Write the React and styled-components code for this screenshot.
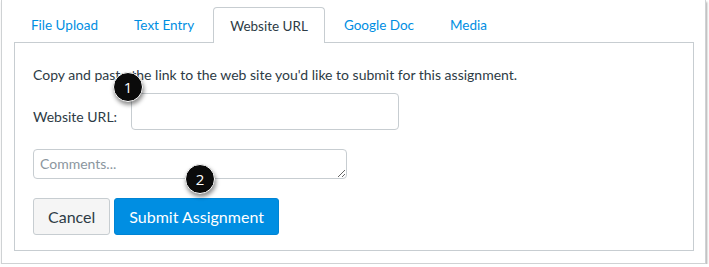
import styled, { createGlobalStyle } from "styled-components";

const GlobalStyle = createGlobalStyle`
  body {
    margin: 0;
    background: #ffffff;
    font-family: Lato, "Open Sans", sans-serif;
  }
`;

const tabs = ["File Upload", "Text Entry", "Website URL", "Google Doc", "Media"];

function App() {
  return (
    <>
      <GlobalStyle />
      <Frame>
        <TabList>
          {tabs.map((t) => (
            <Tab key={t} $active={t === "Website URL"}>
              {t}
            </Tab>
          ))}
        </TabList>
        <Panel>
          <Intro>Copy and paste the link to the web site you'd like to submit for this assignment.</Intro>
          <Row>
            <Label>Website URL:</Label>
            <UrlInput type="text" />
          </Row>
          <Comments placeholder="Comments..." />
          <Actions>
            <Button>Cancel</Button>
            <Button $primary>Submit Assignment</Button>
          </Actions>
        </Panel>
        {/* callout badges */}
        <Badge $x={126} $y={87}>1</Badge>
        <Badge $x={198} $y={179}>2</Badge>
      </Frame>
    </>
  );
}

const Frame = styled.div`
  position: relative;
  box-sizing: border-box;
  width: 705px;
  height: 264px;
  margin-left: 1px;
  padding: 7px 11px 0 12px;
  border: 1px solid #cfd2d4;
  border-top: none;
  box-shadow: 1px 2px 2px rgba(0, 0, 0, 0.35);
  background: #fff;
`;

const TabList = styled.div`
  display: flex;
  gap: 2px;
  height: 35px;
  position: relative;
  z-index: 1;
`;

const Tab = styled.div`
  box-sizing: border-box;
  height: ${(p) => (p.$active ? "36px" : "35px")};
  padding: 0 16px;
  display: flex;
  align-items: center;
  font-size: 13.5px;
  color: ${(p) => (p.$active ? "#2d3b45" : "#008ee2")};
  background: ${(p) => (p.$active ? "#fff" : "transparent")};
  border: 1px solid ${(p) => (p.$active ? "#c7cdd1" : "transparent")};
  border-bottom: none;
  border-radius: 4px 4px 0 0;
`;

const Panel = styled.div`
  box-sizing: border-box;
  width: 680px;
  height: 209px;
  border: 1px solid #c7cdd1;
  padding: 22px 18px 0;
  display: flex;
  flex-direction: column;
  color: #2d3b45;
`;

const Intro = styled.p`
  margin: 0;
  font-size: 14px;
  line-height: 20px;
`;

const Row = styled.div`
  display: flex;
  align-items: center;
  gap: 14px;
  margin-top: 8px;
`;

const Label = styled.label`
  font-size: 14px;
  margin-top: 10px;
`;

const UrlInput = styled.input`
  box-sizing: border-box;
  width: 268px;
  height: 37px;
  border: 1px solid #c7cdd1;
  border-radius: 4px;
  outline: none;
`;

const Comments = styled.textarea`
  box-sizing: border-box;
  width: 314px;
  height: 30px;
  margin-top: 19px;
  padding: 5px 6px;
  border: 1px solid #c7cdd1;
  border-radius: 4px;
  font-family: Lato, sans-serif;
  font-size: 14px;
  color: #2d3b45;
  &::placeholder {
    color: #8b969e;
  }
`;

const Actions = styled.div`
  display: flex;
  gap: 4px;
  margin-top: 19px;
`;

const Button = styled.button`
  box-sizing: border-box;
  height: 37px;
  padding: 0 14px;
  font-family: Lato, sans-serif;
  font-size: 16px;
  border-radius: 3px;
  border: 1px solid ${(p) => (p.$primary ? "#0084d4" : "#c7cdd1")};
  background: ${(p) => (p.$primary ? "#008ee2" : "#f5f5f5")};
  color: ${(p) => (p.$primary ? "#fff" : "#2d3b45")};
`;

const Badge = styled.div`
  position: absolute;
  left: ${(p) => p.$x - 15}px;
  top: ${(p) => p.$y - 15}px;
  box-sizing: border-box;
  width: 30px;
  height: 30px;
  border-radius: 50%;
  background: #0b0b0b;
  border: 1.5px solid #fff;
  box-shadow: 1px 3px 4px rgba(0, 0, 0, 0.45);
  color: #fff;
  font-family: "Open Sans", sans-serif;
  font-size: 15px;
  display: flex;
  align-items: center;
  justify-content: center;
  z-index: 2;
`;

export default App;
